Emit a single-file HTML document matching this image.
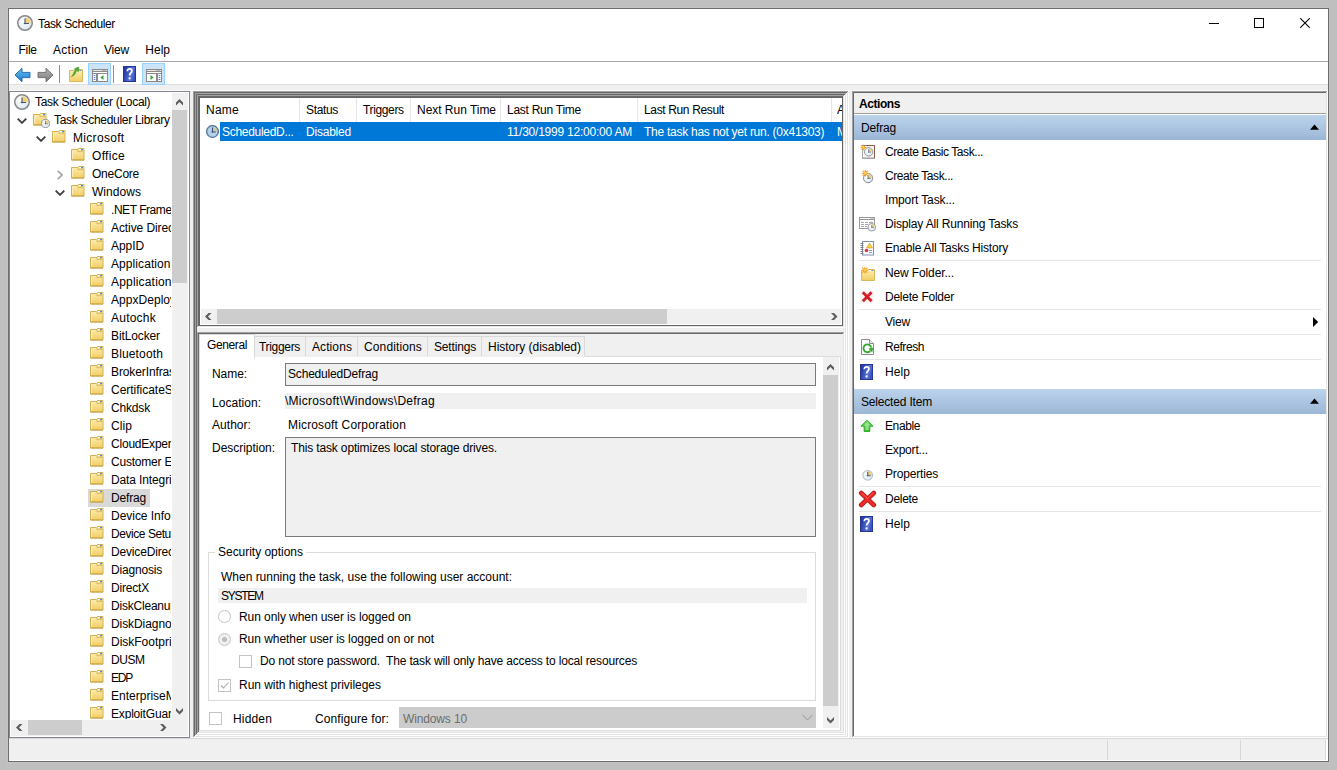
<!DOCTYPE html>
<html lang="en"><head><meta charset="utf-8"><title>Task Scheduler</title>
<style>
html,body{margin:0;padding:0}
body{width:1337px;height:770px;position:relative;overflow:hidden;background:#bfbfbf;font:12px/16px "Liberation Sans",sans-serif;color:#000}
body>div,body>span,body>svg{position:absolute;display:block}
.t{white-space:nowrap;height:16px;line-height:16px}
</style></head><body>
<svg width="0" height="0" style="left:0;top:0"><defs>
<linearGradient id="fg" x1="0" y1="0" x2="0" y2="1"><stop offset="0" stop-color="#fdf0b8"/><stop offset="1" stop-color="#f2cd62"/></linearGradient>
<linearGradient id="hg" x1="0" y1="0" x2="1" y2="0.3"><stop offset="0" stop-color="#22328c"/><stop offset="0.3" stop-color="#2f45b4"/><stop offset="0.75" stop-color="#5f7ade"/><stop offset="1" stop-color="#3a52c0"/></linearGradient>
<radialGradient id="cg" cx="0.4" cy="0.4" r="0.7"><stop offset="0" stop-color="#ffffff"/><stop offset="1" stop-color="#d5e3f0"/></radialGradient>
<linearGradient id="ba" x1="0" y1="0" x2="0" y2="1"><stop offset="0" stop-color="#6cc0f5"/><stop offset="1" stop-color="#1a78c8"/></linearGradient>
<linearGradient id="ga" x1="0" y1="0" x2="0" y2="1"><stop offset="0" stop-color="#b5b5b5"/><stop offset="1" stop-color="#7c7c7c"/></linearGradient>
<linearGradient id="gr" x1="0" y1="0" x2="0" y2="1"><stop offset="0" stop-color="#8fe07a"/><stop offset="1" stop-color="#2fa52a"/></linearGradient>
<g id="clock"><circle cx="8" cy="8" r="7.25" fill="url(#cg)" stroke="#8a8a8a" stroke-width="1.5"/><path d="M8 8V2.2A5.8 5.8 0 0 1 13.8 8Z" fill="#f1d07c"/><path d="M8 3.4V9.2M6.8 8.5H12" stroke="#3e566f" stroke-width="1.1" fill="none"/></g>
<g id="clockb"><circle cx="8" cy="8" r="7.2" fill="#b6d0ea" stroke="#54789c" stroke-width="1.7"/><path d="M8 8V2.3A5.7 5.7 0 0 1 13.7 8Z" fill="#d8c6a2"/><path d="M8 3.2V9.4M6.6 8.5H12" stroke="#34567c" stroke-width="1.3" fill="none"/></g>
<g id="folder"><path d="M1.5 2.5H7.6L8.4 1.5H14V13H1.5Z" fill="url(#fg)" stroke="#d3b052" stroke-width="1"/><path d="M8.3 2H13.5V4.6H8.3Z" fill="#f4d681"/><path d="M7.9 2.6V4.7H13.6" fill="none" stroke="#d9b75c" stroke-width="0.9"/><path d="M2.5 3.5V12" stroke="#fdf3c4" stroke-width="0.8"/><path d="M1.5 13H14" fill="none" stroke="#bf9b42" stroke-width="1" opacity="0.85"/><path d="M8.8 2.6H11.2" stroke="#fff" stroke-width="1.1"/><path d="M11 2.6H13" stroke="#3f8ce8" stroke-width="1.1"/></g>
<g id="help"><rect x="0.5" y="0.5" width="12" height="15" fill="url(#hg)" stroke="#26368f"/><path d="M4.3 5.2C4.3 3.4 5.4 2.8 6.6 2.8 7.9 2.8 8.9 3.6 8.9 4.9 8.9 6.9 6.6 7 6.6 9.6" fill="none" stroke="#fff" stroke-width="1.7"/><circle cx="6.6" cy="12.3" r="1.15" fill="#fff"/></g>
<g id="redx"><path d="M2 2.5L13.5 13.5M13.5 2.5L2 13.5" stroke="#d3212a" stroke-width="3.2" stroke-linecap="round"/></g>
</defs></svg>
<div style="left:7px;top:7px;width:1323px;height:756px;background:#c4c4c4;"></div>
<div style="left:8px;top:8px;width:1319px;height:752px;background:#ffffff;border:1px solid #6d6d6d;"></div>
<svg style="left:17px;top:15px" width="16" height="16"><use href="#clock"/></svg>
<span id="t0" class="t" style="left:38px;top:16px;letter-spacing:-0.360px;">Task Scheduler</span>
<div style="left:1209px;top:23px;width:10px;height:1px;background:#000;"></div>
<div style="left:1254px;top:18px;width:8px;height:8px;border:1px solid #000;"></div>
<svg style="left:1300px;top:18px;" width="10" height="10" viewBox="0 0 10 10"><path d="M0.3 0.3L9.7 9.7M9.7 0.3L0.3 9.7" stroke="#000" stroke-width="1.1"/></svg>
<span id="t1" class="t" style="left:18.6px;top:42px;letter-spacing:-0.336px;">File</span>
<span id="t2" class="t" style="left:53px;top:42px;letter-spacing:0.273px;">Action</span>
<span id="t3" class="t" style="left:104px;top:42px;letter-spacing:-0.199px;">View</span>
<span id="t4" class="t" style="left:145.3px;top:42px;letter-spacing:0.003px;">Help</span>
<div style="left:9px;top:61px;width:1319px;height:1px;background:#a6a9ae;"></div>
<div style="left:9px;top:84px;width:1319px;height:1px;background:#dfdfdf;"></div>
<div style="left:9px;top:85px;width:1319px;height:653px;background:#f0f0f0;"></div>
<svg style="left:13.5px;top:66.5px;" width="17" height="16" viewBox="0 0 17 16"><path d="M8 1.2L1 8L8 14.8V10.6H16V5.4H8Z" fill="url(#ba)" stroke="#1567b0" stroke-width="0.9"/></svg>
<svg style="left:36.5px;top:66.5px;" width="17" height="16" viewBox="0 0 17 16"><path d="M9 1.2L16 8L9 14.8V10.6H1V5.4H9Z" fill="url(#ga)" stroke="#6a6a6a" stroke-width="0.9"/></svg>
<div style="left:59px;top:65px;width:1px;height:18px;background:#8d8d8d;"></div>
<svg style="left:68px;top:66px;" width="16" height="16" viewBox="0 0 16 16"><path d="M1.5 4.5H7L8.2 3.5H14.5V15.5H1.5Z" fill="url(#fg)" stroke="#d8b85a"/><path d="M9 4.5H13.4" stroke="#fff"/><path d="M11.4 4.5H13.4" stroke="#5b9bea"/><path d="M3.2 10.5C5.8 9.5 5.2 5.2 7.6 4.4L6.4 2.8L10.8 1L10.4 5.8L9 4.6C7.4 5.6 8 9.8 3.2 10.5Z" fill="#4db32f" stroke="#2f8a1c" stroke-width="0.5"/></svg>
<div style="left:88px;top:63px;width:21px;height:20px;background:#cce4f7;border:1px solid #99d1ff;"></div>
<svg style="left:92px;top:69px;" width="16" height="13" viewBox="0 0 16 13"><rect x="0.5" y="0.5" width="15" height="12" fill="#fff" stroke="#8a8a8a"/><path d="M1 2.5H15" stroke="#8a8a8a"/><path d="M1 1.5H15" stroke="#e8e8e8"/><path d="M10.5 1.5H11.5M12.5 1.5H13.5" stroke="#8a8a8a"/><rect x="0.5" y="4.5" width="4" height="8" fill="#fff" stroke="#8a8a8a"/><path d="M1.7 6.5H3.3M1.7 8.5H3.3M1.7 10.5H3.3" stroke="#4f78d0"/><rect x="5.5" y="4.5" width="10" height="8" fill="#fff" stroke="#8a8a8a"/><path d="M11.5 6V11L8.3 8.5Z" fill="#35a635"/></svg>
<div style="left:113px;top:65px;width:1px;height:18px;background:#8d8d8d;"></div>
<svg style="left:123px;top:66px" width="13" height="16"><use href="#help"/></svg>
<div style="left:142px;top:63px;width:21px;height:20px;background:#cce4f7;border:1px solid #99d1ff;"></div>
<svg style="left:146px;top:69px;" width="16" height="13" viewBox="0 0 16 13"><rect x="0.5" y="0.5" width="15" height="12" fill="#fff" stroke="#8a8a8a"/><path d="M1 2.5H15" stroke="#8a8a8a"/><path d="M1 1.5H15" stroke="#e8e8e8"/><path d="M10.5 1.5H11.5M12.5 1.5H13.5" stroke="#8a8a8a"/><rect x="11.5" y="4.5" width="4" height="8" fill="#fff" stroke="#8a8a8a"/><path d="M12.7 6.5H14.3M12.7 8.5H14.3M12.7 10.5H14.3" stroke="#4f78d0"/><rect x="0.5" y="4.5" width="10" height="8" fill="#fff" stroke="#8a8a8a"/><path d="M4.5 6V11L7.7 8.5Z" fill="#35a635"/></svg>
<div style="left:9px;top:90px;width:1319px;height:1px;background:#fafafa;"></div>
<div style="left:9px;top:91px;width:179px;height:645px;background:#ffffff;border:1px solid #828790;"></div>
<svg style="left:14px;top:94px" width="16" height="16"><use href="#clock"/></svg>
<span id="t5" class="t" style="left:35px;top:94px;letter-spacing:-0.307px;width:136px;overflow:hidden;">Task Scheduler (Local)</span>
<svg style="left:17px;top:118px;" width="10" height="6" viewBox="0 0 10 6"><path d="M0.7 0.6L5 4.9L9.3 0.6" fill="none" stroke="#404040" stroke-width="1.8"/></svg>
<svg style="left:32px;top:112px" width="16" height="16"><use href="#folder"/></svg>
<svg style="left:40.5px;top:119px" width="9" height="9" viewBox="0 0 16.0 16.0"><use href="#clock"/></svg>
<span id="t6" class="t" style="left:54px;top:112px;letter-spacing:-0.294px;width:117px;overflow:hidden;">Task Scheduler Library</span>
<svg style="left:36px;top:136px;" width="10" height="6" viewBox="0 0 10 6"><path d="M0.7 0.6L5 4.9L9.3 0.6" fill="none" stroke="#404040" stroke-width="1.8"/></svg>
<svg style="left:51px;top:129px" width="16" height="16"><use href="#folder"/></svg>
<span id="t7" class="t" style="left:73px;top:130px;letter-spacing:0.312px;width:98px;overflow:hidden;">Microsoft</span>
<svg style="left:70px;top:147px" width="16" height="16"><use href="#folder"/></svg>
<span id="t8" class="t" style="left:92px;top:148px;letter-spacing:0.312px;width:79px;overflow:hidden;">Office</span>
<svg style="left:56.5px;top:170px;" width="6" height="10" viewBox="0 0 6 10"><path d="M0.7 0.7L5 5L0.7 9.3" fill="none" stroke="#a0a0a0" stroke-width="1.6"/></svg>
<svg style="left:70px;top:165px" width="16" height="16"><use href="#folder"/></svg>
<span id="t9" class="t" style="left:92px;top:166px;letter-spacing:-0.243px;width:79px;overflow:hidden;">OneCore</span>
<svg style="left:55px;top:190px;" width="10" height="6" viewBox="0 0 10 6"><path d="M0.7 0.6L5 4.9L9.3 0.6" fill="none" stroke="#404040" stroke-width="1.8"/></svg>
<svg style="left:70px;top:183px" width="16" height="16"><use href="#folder"/></svg>
<span id="t10" class="t" style="left:92px;top:184px;letter-spacing:0.045px;width:79px;overflow:hidden;">Windows</span>
<svg style="left:89px;top:201px" width="16" height="16"><use href="#folder"/></svg>
<span id="t11" class="t" style="left:111px;top:202px;letter-spacing:-0.452px;width:60px;overflow:hidden;">.NET Framework</span>
<svg style="left:89px;top:219px" width="16" height="16"><use href="#folder"/></svg>
<span id="t12" class="t" style="left:111px;top:220px;letter-spacing:-0.083px;width:60px;overflow:hidden;">Active Directory Rights Management Services Client</span>
<svg style="left:89px;top:237px" width="16" height="16"><use href="#folder"/></svg>
<span id="t13" class="t" style="left:111px;top:238px;letter-spacing:-0.072px;width:60px;overflow:hidden;">AppID</span>
<svg style="left:89px;top:255px" width="16" height="16"><use href="#folder"/></svg>
<span id="t14" class="t" style="left:111px;top:256px;letter-spacing:0.080px;width:60px;overflow:hidden;">Application Experience</span>
<svg style="left:89px;top:273px" width="16" height="16"><use href="#folder"/></svg>
<span id="t15" class="t" style="left:111px;top:274px;letter-spacing:0.180px;width:60px;overflow:hidden;">ApplicationData</span>
<svg style="left:89px;top:291px" width="16" height="16"><use href="#folder"/></svg>
<span id="t16" class="t" style="left:111px;top:292px;letter-spacing:0.042px;width:60px;overflow:hidden;">AppxDeploymentClient</span>
<svg style="left:89px;top:309px" width="16" height="16"><use href="#folder"/></svg>
<span id="t17" class="t" style="left:111px;top:310px;letter-spacing:0.234px;width:60px;overflow:hidden;">Autochk</span>
<svg style="left:89px;top:327px" width="16" height="16"><use href="#folder"/></svg>
<span id="t18" class="t" style="left:111px;top:328px;letter-spacing:-0.115px;width:60px;overflow:hidden;">BitLocker</span>
<svg style="left:89px;top:345px" width="16" height="16"><use href="#folder"/></svg>
<span id="t19" class="t" style="left:111px;top:346px;letter-spacing:0.142px;width:60px;overflow:hidden;">Bluetooth</span>
<svg style="left:89px;top:363px" width="16" height="16"><use href="#folder"/></svg>
<span id="t20" class="t" style="left:111px;top:364px;letter-spacing:-0.114px;width:60px;overflow:hidden;">BrokerInfrastructure</span>
<svg style="left:89px;top:381px" width="16" height="16"><use href="#folder"/></svg>
<span id="t21" class="t" style="left:111px;top:382px;letter-spacing:-0.021px;width:60px;overflow:hidden;">CertificateServicesClient</span>
<svg style="left:89px;top:399px" width="16" height="16"><use href="#folder"/></svg>
<span id="t22" class="t" style="left:111px;top:400px;letter-spacing:-0.169px;width:60px;overflow:hidden;">Chkdsk</span>
<svg style="left:89px;top:417px" width="16" height="16"><use href="#folder"/></svg>
<span id="t23" class="t" style="left:111px;top:418px;letter-spacing:0.082px;width:60px;overflow:hidden;">Clip</span>
<svg style="left:89px;top:435px" width="16" height="16"><use href="#folder"/></svg>
<span id="t24" class="t" style="left:111px;top:436px;letter-spacing:-0.210px;width:60px;overflow:hidden;">CloudExperienceHost</span>
<svg style="left:89px;top:453px" width="16" height="16"><use href="#folder"/></svg>
<span id="t25" class="t" style="left:111px;top:454px;letter-spacing:-0.214px;width:60px;overflow:hidden;">Customer Experience Improvement Program</span>
<svg style="left:89px;top:471px" width="16" height="16"><use href="#folder"/></svg>
<span id="t26" class="t" style="left:111px;top:472px;letter-spacing:-0.121px;width:60px;overflow:hidden;">Data Integrity Scan</span>
<div style="left:88px;top:489px;width:62px;height:18px;background:#d9d9d9;"></div>
<svg style="left:89px;top:489px" width="16" height="16"><use href="#folder"/></svg>
<span id="t27" class="t" style="left:111px;top:490px;letter-spacing:-0.172px;width:60px;overflow:hidden;">Defrag</span>
<svg style="left:89px;top:507px" width="16" height="16"><use href="#folder"/></svg>
<span id="t28" class="t" style="left:111px;top:508px;letter-spacing:-0.030px;width:60px;overflow:hidden;">Device Information</span>
<svg style="left:89px;top:525px" width="16" height="16"><use href="#folder"/></svg>
<span id="t29" class="t" style="left:111px;top:526px;letter-spacing:-0.446px;width:60px;overflow:hidden;">Device Setup</span>
<svg style="left:89px;top:543px" width="16" height="16"><use href="#folder"/></svg>
<span id="t30" class="t" style="left:111px;top:544px;letter-spacing:-0.159px;width:60px;overflow:hidden;">DeviceDirectoryClient</span>
<svg style="left:89px;top:561px" width="16" height="16"><use href="#folder"/></svg>
<span id="t31" class="t" style="left:111px;top:562px;letter-spacing:-0.189px;width:60px;overflow:hidden;">Diagnosis</span>
<svg style="left:89px;top:579px" width="16" height="16"><use href="#folder"/></svg>
<span id="t32" class="t" style="left:111px;top:580px;letter-spacing:-0.192px;width:60px;overflow:hidden;">DirectX</span>
<svg style="left:89px;top:597px" width="16" height="16"><use href="#folder"/></svg>
<span id="t33" class="t" style="left:111px;top:598px;letter-spacing:-0.206px;width:60px;overflow:hidden;">DiskCleanup</span>
<svg style="left:89px;top:615px" width="16" height="16"><use href="#folder"/></svg>
<span id="t34" class="t" style="left:111px;top:616px;letter-spacing:-0.076px;width:60px;overflow:hidden;">DiskDiagnostic</span>
<svg style="left:89px;top:633px" width="16" height="16"><use href="#folder"/></svg>
<span id="t35" class="t" style="left:111px;top:634px;letter-spacing:-0.008px;width:60px;overflow:hidden;">DiskFootprint</span>
<svg style="left:89px;top:651px" width="16" height="16"><use href="#folder"/></svg>
<span id="t36" class="t" style="left:111px;top:652px;letter-spacing:-0.461px;width:60px;overflow:hidden;">DUSM</span>
<svg style="left:89px;top:669px" width="16" height="16"><use href="#folder"/></svg>
<span id="t37" class="t" style="left:111px;top:670px;letter-spacing:-1.229px;width:60px;overflow:hidden;">EDP</span>
<svg style="left:89px;top:687px" width="16" height="16"><use href="#folder"/></svg>
<span id="t38" class="t" style="left:111px;top:688px;letter-spacing:0.010px;width:60px;overflow:hidden;">EnterpriseMgmt</span>
<svg style="left:89px;top:705px" width="16" height="16"><use href="#folder"/></svg>
<span id="t39" class="t" style="left:111px;top:706px;letter-spacing:-0.182px;width:60px;overflow:hidden;">ExploitGuard</span>
<div style="left:10px;top:719px;width:162px;height:1px;background:#ffffff;"></div>
<div style="left:172px;top:93px;width:16px;height:627px;background:#f0f0f0;"></div>
<svg style="left:176px;top:99px;" width="7" height="7" viewBox="0 0 7 7"><path d="M0 6.5L3.5 3L7 6.5V3.5L3.5 0L0 3.5Z" fill="#5c5c5c"/></svg>
<div style="left:172px;top:110px;width:15px;height:173px;background:#cdcdcd;"></div>
<svg style="left:176px;top:708px;" width="7" height="7" viewBox="0 0 7 7"><path d="M0 0L3.5 3.5L7 0V3L3.5 6.5L0 3Z" fill="#5c5c5c"/></svg>
<div style="left:11px;top:720px;width:177px;height:16px;background:#f0f0f0;"></div>
<svg style="left:16px;top:724px;" width="7" height="7" viewBox="0 0 7 7"><path d="M6.5 0L3 3.5L6.5 7H3.5L0 3.5L3.5 0Z" fill="#5c5c5c"/></svg>
<div style="left:28px;top:720px;width:54px;height:15px;background:#cdcdcd;"></div>
<svg style="left:160px;top:724px;" width="7" height="7" viewBox="0 0 7 7"><path d="M0 0L3.5 3.5L0 7H3L6.5 3.5L3 0Z" fill="#5c5c5c"/></svg>
<div style="left:10px;top:736px;width:178px;height:1px;background:#ffffff;"></div>
<div style="left:188px;top:92px;width:1px;height:645px;background:#ffffff;"></div>
<div style="left:193px;top:91px;width:655px;height:646px;border-left:1px solid #a0a0a0;border-top:1px solid #a0a0a0;"></div>
<div style="left:193px;top:91px;width:655px;height:646px;border-right:1px solid #ffffff;border-bottom:1px solid #ffffff;"></div>
<div style="left:194px;top:92px;width:653px;height:644px;border-left:1px solid #696969;border-top:1px solid #696969;"></div>
<div style="left:194px;top:92px;width:653px;height:644px;border-right:1px solid #e3e3e3;border-bottom:1px solid #e3e3e3;"></div>
<div style="left:195px;top:93px;width:651px;height:642px;border-left:1px solid #a0a0a0;border-top:1px solid #a0a0a0;"></div>
<div style="left:195px;top:93px;width:651px;height:642px;border-right:1px solid #ffffff;border-bottom:1px solid #ffffff;"></div>
<div style="left:196px;top:94px;width:649px;height:640px;border-left:1px solid #696969;border-top:1px solid #696969;"></div>
<div style="left:196px;top:94px;width:649px;height:640px;border-right:1px solid #e3e3e3;border-bottom:1px solid #e3e3e3;"></div>
<div style="left:197px;top:95px;width:647px;height:638px;border-left:1px solid #a0a0a0;border-top:1px solid #a0a0a0;"></div>
<div style="left:197px;top:95px;width:647px;height:638px;border-right:1px solid #ffffff;border-bottom:1px solid #ffffff;"></div>
<div style="left:198px;top:96px;width:645px;height:636px;border-left:1px solid #696969;border-top:1px solid #696969;"></div>
<div style="left:198px;top:96px;width:645px;height:636px;border-right:1px solid #e3e3e3;border-bottom:1px solid #e3e3e3;"></div>
<div style="left:199px;top:97px;width:642px;height:227px;background:#ffffff;border:1px solid #646464;"></div>
<div style="left:299px;top:98px;width:1px;height:24px;background:#e5e5e5;"></div>
<div style="left:356px;top:98px;width:1px;height:24px;background:#e5e5e5;"></div>
<div style="left:410px;top:98px;width:1px;height:24px;background:#e5e5e5;"></div>
<div style="left:500px;top:98px;width:1px;height:24px;background:#e5e5e5;"></div>
<div style="left:637px;top:98px;width:1px;height:24px;background:#e5e5e5;"></div>
<div style="left:831px;top:98px;width:1px;height:24px;background:#e5e5e5;"></div>
<span id="t40" class="t" style="left:206px;top:102px;letter-spacing:0.246px;">Name</span>
<span id="t41" class="t" style="left:306px;top:102px;letter-spacing:-0.339px;">Status</span>
<span id="t42" class="t" style="left:363px;top:102px;letter-spacing:-0.360px;">Triggers</span>
<span id="t43" class="t" style="left:417px;top:102px;letter-spacing:-0.028px;">Next Run Time</span>
<span id="t44" class="t" style="left:507px;top:102px;letter-spacing:-0.260px;">Last Run Time</span>
<span id="t45" class="t" style="left:644px;top:102px;letter-spacing:-0.359px;">Last Run Result</span>
<span id="t46" class="t" style="left:837px;top:102px;width:5px;overflow:hidden;">Author</span>
<svg style="left:206px;top:125px" width="13" height="13" viewBox="0 0 16.0 16.0"><use href="#clockb"/></svg>
<div style="left:220px;top:122px;width:622px;height:19px;background:#0078d7;"></div>
<span id="t47" class="t" style="left:222px;top:124px;color:#fff;letter-spacing:-0.299px;">ScheduledD...</span>
<span id="t48" class="t" style="left:306px;top:124px;color:#fff;letter-spacing:-0.213px;">Disabled</span>
<span id="t49" class="t" style="left:507px;top:124px;color:#fff;letter-spacing:-0.222px;">11/30/1999 12:00:00 AM</span>
<span id="t50" class="t" style="left:644px;top:124px;color:#fff;letter-spacing:-0.262px;">The task has not yet run. (0x41303)</span>
<span id="t51" class="t" style="left:837px;top:124px;color:#fff;width:5px;overflow:hidden;">Microsoft Corporation</span>
<div style="left:201px;top:309px;width:640px;height:15px;background:#f0f0f0;"></div>
<svg style="left:205px;top:313px;" width="7" height="7" viewBox="0 0 7 7"><path d="M6.5 0L3 3.5L6.5 7H3.5L0 3.5L3.5 0Z" fill="#5c5c5c"/></svg>
<div style="left:217px;top:309px;width:450px;height:15px;background:#cdcdcd;"></div>
<svg style="left:831px;top:313px;" width="7" height="7" viewBox="0 0 7 7"><path d="M0 0L3.5 3.5L0 7H3L6.5 3.5L3 0Z" fill="#5c5c5c"/></svg>
<div style="left:198px;top:326px;width:646px;height:1px;background:#e9e9e9;"></div>
<div style="left:197px;top:327px;width:648px;height:1px;background:#ffffff;"></div>
<div style="left:197px;top:328px;width:648px;height:4px;background:#f0f0f0;"></div>
<div style="left:197px;top:332px;width:647px;height:1px;background:#a0a0a0;"></div>
<div style="left:198px;top:333px;width:645px;height:1px;background:#696969;"></div>
<div style="left:199px;top:334px;width:644px;height:398px;background:#f0f0f0;"></div>
<div style="left:199px;top:356px;width:640px;height:373px;background:#ffffff;border:1px solid #dcdcdc;"></div>
<div style="left:253px;top:336px;width:332px;height:20px;background:#f0f0f0;border-top:1px solid #d9d9d9;"></div>
<div style="left:305px;top:336px;width:1px;height:20px;background:#d9d9d9;"></div>
<div style="left:357px;top:336px;width:1px;height:20px;background:#d9d9d9;"></div>
<div style="left:427px;top:336px;width:1px;height:20px;background:#d9d9d9;"></div>
<div style="left:481px;top:336px;width:1px;height:20px;background:#d9d9d9;"></div>
<div style="left:584px;top:336px;width:1px;height:20px;background:#d9d9d9;"></div>
<span id="t52" class="t" style="left:259px;top:339px;letter-spacing:-0.322px;">Triggers</span>
<span id="t53" class="t" style="left:312px;top:339px;letter-spacing:0.092px;">Actions</span>
<span id="t54" class="t" style="left:364px;top:339px;letter-spacing:0.130px;">Conditions</span>
<span id="t55" class="t" style="left:434px;top:339px;letter-spacing:-0.170px;">Settings</span>
<span id="t56" class="t" style="left:488px;top:339px;letter-spacing:-0.021px;">History (disabled)</span>
<div style="left:199px;top:334px;width:54px;height:23px;background:#ffffff;border:1px solid #d9d9d9;border-bottom:none;"></div>
<span id="t57" class="t" style="left:207px;top:337px;letter-spacing:-0.386px;">General</span>
<span id="t58" class="t" style="left:212px;top:366px;letter-spacing:-0.069px;">Name:</span>
<div style="left:285px;top:363px;width:529px;height:21px;background:#f0f0f0;border:1px solid #7a7a7a;"></div>
<span id="t59" class="t" style="left:288px;top:366px;letter-spacing:-0.182px;">ScheduledDefrag</span>
<span id="t60" class="t" style="left:212px;top:395px;letter-spacing:0.033px;">Location:</span>
<div style="left:285px;top:393px;width:531px;height:16px;background:#f0f0f0;"></div>
<span id="t61" class="t" style="left:285px;top:393px;letter-spacing:0.265px;">\Microsoft\Windows\Defrag</span>
<span id="t62" class="t" style="left:212px;top:417px;letter-spacing:0.042px;">Author:</span>
<span id="t63" class="t" style="left:288px;top:417px;letter-spacing:0.156px;">Microsoft Corporation</span>
<span id="t64" class="t" style="left:212px;top:440px;letter-spacing:-0.030px;">Description:</span>
<div style="left:285px;top:437px;width:529px;height:98px;background:#f0f0f0;border:1px solid #7a7a7a;"></div>
<span id="t65" class="t" style="left:291px;top:440px;letter-spacing:-0.149px;">This task optimizes local storage drives.</span>
<div style="left:208px;top:552px;width:606px;height:147px;border:1px solid #dcdcdc;"></div>
<div style="left:215px;top:545px;width:91px;height:14px;background:#ffffff;"></div>
<span id="t66" class="t" style="left:218px;top:544px;letter-spacing:-0.024px;">Security options</span>
<span id="t67" class="t" style="left:221px;top:569px;letter-spacing:-0.010px;">When running the task, use the following user account:</span>
<div style="left:218px;top:588px;width:589px;height:15px;background:#f0f0f0;"></div>
<span id="t68" class="t" style="left:221px;top:588px;letter-spacing:-1.291px;">SYSTEM</span>
<div style="left:218px;top:610px;width:11px;height:11px;background:#ffffff;border:1px solid #c3c3c3;border-radius:50%;"></div>
<span id="t69" class="t" style="left:239px;top:609px;letter-spacing:-0.069px;">Run only when user is logged on</span>
<div style="left:218px;top:633px;width:11px;height:11px;background:#f0f0f0;border:1px solid #c3c3c3;border-radius:50%;"></div>
<div style="left:222px;top:637px;width:5px;height:5px;background:#bcbcbc;border-radius:50%;"></div>
<span id="t70" class="t" style="left:239px;top:631px;letter-spacing:-0.050px;">Run whether user is logged on or not</span>
<div style="left:239px;top:655px;width:11px;height:11px;background:#ffffff;border:1px solid #c3c3c3;"></div>
<span id="t71" class="t" style="left:260px;top:653px;letter-spacing:-0.159px;white-space:pre;">Do not store password.  The task will only have access to local resources</span>
<div style="left:218px;top:679px;width:11px;height:11px;background:#ffffff;border:1px solid #c3c3c3;"></div>
<svg style="left:219px;top:680px;" width="11" height="11" viewBox="0 0 11 11"><path d="M2 5.5L4.5 8L9.5 2.5" fill="none" stroke="#a8a8a8" stroke-width="1.1"/></svg>
<span id="t72" class="t" style="left:239px;top:677px;letter-spacing:-0.028px;">Run with highest privileges</span>
<div style="left:209px;top:712px;width:11px;height:11px;background:#ffffff;border:1px solid #c3c3c3;"></div>
<span id="t73" class="t" style="left:233px;top:711px;letter-spacing:0.161px;">Hidden</span>
<span id="t74" class="t" style="left:315px;top:711px;letter-spacing:0.093px;">Configure for:</span>
<div style="left:399px;top:707px;width:417px;height:21px;background:#cccccc;"></div>
<span id="t75" class="t" style="left:403px;top:711px;color:#6d6d6d;letter-spacing:-0.138px;">Windows 10</span>
<svg style="left:802px;top:714px;" width="11" height="7" viewBox="0 0 11 7"><path d="M0.5 0.8L5.5 5.8L10.5 0.8" fill="none" stroke="#a6a6a6" stroke-width="1.1"/></svg>
<div style="left:823px;top:357px;width:16px;height:371px;background:#f0f0f0;"></div>
<svg style="left:827px;top:364px;" width="7" height="7" viewBox="0 0 7 7"><path d="M0 6.5L3.5 3L7 6.5V3.5L3.5 0L0 3.5Z" fill="#5c5c5c"/></svg>
<div style="left:823px;top:375px;width:15px;height:331px;background:#cdcdcd;"></div>
<svg style="left:827px;top:717px;" width="7" height="7" viewBox="0 0 7 7"><path d="M0 0L3.5 3.5L7 0V3L3.5 6.5L0 3Z" fill="#5c5c5c"/></svg>
<div style="left:852px;top:91px;width:476px;height:1px;background:#a0a0a0;"></div>
<div style="left:852px;top:91px;width:1px;height:647px;background:#a0a0a0;"></div>
<div style="left:853px;top:92px;width:475px;height:1px;background:#696969;"></div>
<div style="left:853px;top:92px;width:1px;height:645px;background:#696969;"></div>
<div style="left:854px;top:93px;width:472px;height:643px;background:#ffffff;"></div>
<div style="left:1326px;top:92px;width:1px;height:645px;background:#e3e3e3;"></div>
<div style="left:1327px;top:91px;width:1px;height:647px;background:#ffffff;"></div>
<div style="left:853px;top:736px;width:474px;height:1px;background:#e3e3e3;"></div>
<div style="left:852px;top:737px;width:476px;height:1px;background:#ffffff;"></div>
<div style="left:854px;top:93px;width:472px;height:20px;background:#f0f0f0;"></div>
<span id="t76" class="t" style="left:859px;top:96px;font-weight:bold;letter-spacing:-0.431px;">Actions</span>
<div style="left:854px;top:113px;width:472px;height:1px;background:#a0a0a0;"></div>
<div style="left:854px;top:114px;width:472px;height:1px;background:#ffffff;"></div>
<div style="left:854px;top:115px;width:472px;height:25px;background:linear-gradient(#bcd3ec,#9bb6d6);"></div>
<span id="t77" class="t" style="left:861px;top:120px;letter-spacing:-0.172px;">Defrag</span>
<svg style="left:1310px;top:124px;" width="9" height="6" viewBox="0 0 9 6"><path d="M0 5.7L4.5 0.6L9 5.7Z" fill="#000"/></svg>
<span id="t78" class="t" style="left:885px;top:144px;letter-spacing:-0.425px;">Create Basic Task...</span>
<svg style="left:860px;top:144px;" width="16" height="16" viewBox="0 0 16 16"><rect x="2.5" y="1.5" width="12" height="13" fill="#f6f6f6" stroke="#a8a8a8"/><path d="M2.5 1.5H14.5V14" fill="none" stroke="#8c5a4a"/><path d="M3 13.5H14" stroke="#c8c8c8"/><g transform="translate(4,3.2) scale(0.58)"><use href="#clock"/></g><g transform="translate(0,0) scale(0.85)"><path d="M4 0L5.2 2.8L8 4L5.2 5.2L4 8L2.8 5.2L0 4L2.8 2.8Z" fill="#f6a21c"/><path d="M1.2 1.2L6.8 6.8M6.8 1.2L1.2 6.8" stroke="#f6a21c" stroke-width="1.1"/><circle cx="4" cy="4" r="1.3" fill="#fcd66a"/></g></svg>
<span id="t79" class="t" style="left:885px;top:168px;letter-spacing:-0.415px;">Create Task...</span>
<svg style="left:860px;top:168px;" width="16" height="16" viewBox="0 0 16 16"><g transform="translate(3,5) scale(0.64)"><use href="#clock"/></g><g transform="translate(1.5,1.5) scale(0.95)"><path d="M4 0L5.2 2.8L8 4L5.2 5.2L4 8L2.8 5.2L0 4L2.8 2.8Z" fill="#f6a21c"/><path d="M1.2 1.2L6.8 6.8M6.8 1.2L1.2 6.8" stroke="#f6a21c" stroke-width="1.1"/><circle cx="4" cy="4" r="1.3" fill="#fcd66a"/></g></svg>
<span id="t80" class="t" style="left:885px;top:192px;letter-spacing:-0.129px;">Import Task...</span>
<span id="t81" class="t" style="left:885px;top:216px;letter-spacing:-0.168px;">Display All Running Tasks</span>
<svg style="left:859px;top:216px;" width="17" height="16" viewBox="0 0 17 16"><rect x="0.5" y="1.5" width="15" height="11" fill="#fff" stroke="#9a9a9a"/><path d="M1 3.5H15" stroke="#9a9a9a"/><path d="M11.5 2.5H12.5M13.5 2.5H14.5" stroke="#9a9a9a"/><path d="M2 6.5H5M6 6.5H9M10 6.5H14M2 8.5H5M6 8.5H9M2 10.5H5M6 10.5H8" stroke="#a8a8a8" stroke-width="1"/><g transform="translate(8.5,7) scale(0.53)"><use href="#clock"/></g></svg>
<span id="t82" class="t" style="left:885px;top:240px;letter-spacing:-0.202px;">Enable All Tasks History</span>
<svg style="left:859px;top:240px;" width="16" height="16" viewBox="0 0 16 16"><rect x="3.5" y="1.5" width="11" height="13.5" fill="#fff" stroke="#7d8fb5"/><path d="M1.5 3.5H4.5M1.5 5.5H4.5M1.5 7.5H4.5M1.5 9.5H4.5M1.5 11.5H4.5M1.5 13.5H4.5" stroke="#707070" stroke-width="0.9"/><path d="M10.5 3L13.5 8H7.5Z" fill="#f7d038" stroke="#c9a21a" stroke-width="0.6"/><circle cx="7.5" cy="10.5" r="1.8" fill="#d9333f"/><path d="M10 10.5H13M10 12.5H13" stroke="#7d8fb5" stroke-width="0.9"/></svg>
<div style="left:859px;top:260px;width:462px;height:1px;background:#e6e6e6;"></div>
<span id="t83" class="t" style="left:885px;top:265px;letter-spacing:-0.131px;">New Folder...</span>
<svg style="left:860px;top:266px;" width="17" height="16" viewBox="0 0 17 16"><path d="M1.5 4.5H7L8.2 3.5H14.5V14.5H1.5Z" fill="url(#fg)" stroke="#d8b85a"/><path d="M9 4.5H13.4" stroke="#fff"/><path d="M11.4 4.5H13.4" stroke="#5b9bea"/><g transform="translate(1,0.5) scale(0.95)"><path d="M4 0L5.2 2.8L8 4L5.2 5.2L4 8L2.8 5.2L0 4L2.8 2.8Z" fill="#f6a21c"/><path d="M1.2 1.2L6.8 6.8M6.8 1.2L1.2 6.8" stroke="#f6a21c" stroke-width="1.1"/><circle cx="4" cy="4" r="1.3" fill="#fcd66a"/></g></svg>
<span id="t84" class="t" style="left:885px;top:289px;letter-spacing:-0.234px;">Delete Folder</span>
<svg style="left:860px;top:289px;" width="16" height="16" viewBox="0 0 16 16"><rect x="0" y="1.5" width="14" height="13" fill="#f7f4f4"/><path d="M2.8 3.2L11.6 12.2M11.6 3.2L2.8 12.2" stroke="#d3212a" stroke-width="2.9" stroke-linecap="butt"/></svg>
<div style="left:859px;top:309px;width:462px;height:1px;background:#e6e6e6;"></div>
<span id="t85" class="t" style="left:885px;top:314px;letter-spacing:-0.199px;">View</span>
<svg style="left:1313px;top:316.5px;" width="6" height="10" viewBox="0 0 6 10"><path d="M0 0L5.2 5L0 10Z" fill="#000"/></svg>
<div style="left:859px;top:334px;width:462px;height:1px;background:#e6e6e6;"></div>
<span id="t86" class="t" style="left:885px;top:339px;letter-spacing:-0.433px;">Refresh</span>
<svg style="left:860px;top:339px;" width="16" height="17" viewBox="0 0 16 17"><path d="M1.5 0.5H9.5L13.5 4.5V15.5H1.5Z" fill="#fff" stroke="#8a8a8a"/><path d="M9.5 0.5V4.5H13.5" fill="#eee" stroke="#8a8a8a"/><path d="M11.2 8.6A3.9 3.9 0 1 0 10.2 12" fill="none" stroke="#38a632" stroke-width="1.9"/><path d="M8.4 9.6L13.3 8.8L12.2 13.4Z" fill="#38a632"/></svg>
<div style="left:859px;top:359px;width:462px;height:1px;background:#e6e6e6;"></div>
<span id="t87" class="t" style="left:885px;top:364px;letter-spacing:0.078px;">Help</span>
<svg style="left:860px;top:364px" width="13" height="16"><use href="#help"/></svg>
<div style="left:854px;top:389px;width:472px;height:25px;background:linear-gradient(#bcd3ec,#9bb6d6);"></div>
<span id="t88" class="t" style="left:861px;top:394px;letter-spacing:-0.183px;">Selected Item</span>
<svg style="left:1310px;top:398px;" width="9" height="6" viewBox="0 0 9 6"><path d="M0 5.7L4.5 0.6L9 5.7Z" fill="#000"/></svg>
<span id="t89" class="t" style="left:885px;top:418px;letter-spacing:-0.396px;">Enable</span>
<svg style="left:860px;top:416px;" width="16" height="16" viewBox="0 0 16 16"><rect x="0" y="3" width="14" height="13" fill="#f4f8f4"/><path d="M7 4.2L13 10.2H9.8V15.5H4.2V10.2H1Z" fill="url(#gr)" stroke="#2eb22e" stroke-width="1"/><path d="M7 6.4L10.4 9.6H8.6V14.3H5.4V9.6H3.6Z" fill="#a4ec9c" opacity="0.75"/></svg>
<span id="t90" class="t" style="left:885px;top:442px;letter-spacing:-0.188px;">Export...</span>
<span id="t91" class="t" style="left:885px;top:466px;letter-spacing:-0.170px;">Properties</span>
<svg style="left:860px;top:466px;" width="16" height="16" viewBox="0 0 16 16"><g transform="translate(2.3,3.8) scale(0.68)"><circle cx="8" cy="8" r="7.2" fill="url(#cg)" stroke="#b4bfcb" stroke-width="1.5"/><path d="M8 8V1.6A6.4 6.4 0 0 1 14.4 8Z" fill="#f1cf78"/><path d="M8 3V9.6M6.4 8.6H12.4" stroke="#3e566f" stroke-width="1.5" fill="none"/></g></svg>
<div style="left:859px;top:486px;width:462px;height:1px;background:#e6e6e6;"></div>
<span id="t92" class="t" style="left:885px;top:491px;letter-spacing:-0.281px;">Delete</span>
<svg style="left:858px;top:489px;" width="19" height="19" viewBox="0 0 19 19"><path d="M3.2 4L15.8 16M15.8 4L3.2 16" stroke="#b81c1c" stroke-width="4.6" stroke-linecap="round"/><path d="M3.4 4.2L15.6 15.8M15.6 4.2L3.4 15.8" stroke="#ea2b2b" stroke-width="3" stroke-linecap="round"/><path d="M3.8 4L9.5 9.4L15.2 4" stroke="#f66" stroke-width="1" fill="none" opacity="0.7"/></svg>
<div style="left:859px;top:511px;width:462px;height:1px;background:#e6e6e6;"></div>
<span id="t93" class="t" style="left:885px;top:516px;letter-spacing:0.078px;">Help</span>
<svg style="left:860px;top:516px" width="13" height="16"><use href="#help"/></svg>
<div style="left:9px;top:738px;width:1319px;height:1px;background:#d7d7d7;"></div>
<div style="left:9px;top:739px;width:1319px;height:21px;background:#f0f0f0;"></div>
<div style="left:9px;top:760px;width:1319px;height:1px;background:#ffffff;"></div>
<div style="left:1107px;top:740px;width:1px;height:20px;background:#d7d7d7;"></div>
<div style="left:1240px;top:740px;width:1px;height:20px;background:#d7d7d7;"></div>
<div style="left:1325px;top:740px;width:1px;height:20px;background:#d7d7d7;"></div>
<div style="left:1326px;top:739px;width:2px;height:21px;background:#ffffff;"></div>
</body></html>
